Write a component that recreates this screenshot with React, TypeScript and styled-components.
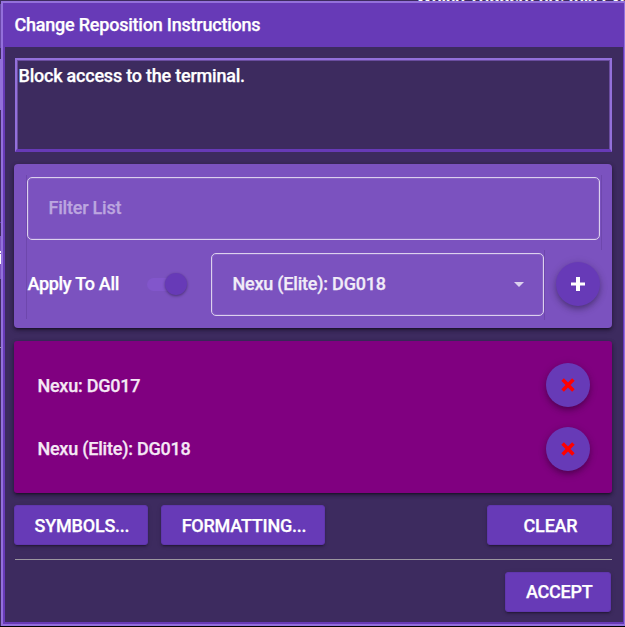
import React from "react";
import styled, { createGlobalStyle } from "styled-components";

const Global = createGlobalStyle`
  *, *::before, *::after { box-sizing: border-box; }
  html, body { margin: 0; padding: 0; background: #000; overflow: hidden; }
  body, button, input, textarea {
    font-family: Roboto, "Liberation Sans", sans-serif;
    font-size: 18px;
    font-weight: 500;
    letter-spacing: -0.22px;
    -webkit-text-stroke: 0.25px currentColor;
  }
`;

const Page = styled.div`
  width: 625px;
  height: 626px;
  display: grid;
  grid-template: 1px 625px / 1px 624px;
  background: #3d2b5f;
  overflow: hidden;
`;

const TopSliver = styled.div`
  grid-column: 1 / 3;
  height: 1px;
  overflow: hidden;
  display: flex;
  align-items: flex-end;
  justify-content: flex-end;
  color: #fff;
`;

const SliverText = styled.span`
  flex: none;
  width: 209px;
  line-height: 20px;
  height: 15px;
  margin-bottom: -1px;
  white-space: nowrap;
`;

const EdgeSliver = styled.div`
  height: 625px;
  overflow: hidden;
  display: flex;
  flex-direction: column;
`;

const EdgeBlock = styled.div<{ $h: number; $c?: string }>`
  flex: none;
  height: ${(p) => p.$h}px;
  background: ${(p) => p.$c || "transparent"};
`;

const Dialog = styled.section`
  height: 625px;
  display: flex;
  flex-direction: column;
  border: solid #9370db;
  border-width: 2px 1px 2px 2px;
  background: #3d2b5f;
`;

const Header = styled.header`
  flex: none;
  height: 44px;
  padding-left: 11.5px;
  display: flex;
  align-items: center;
  background: #673ab7;
  color: #fff;
`;

const Label = styled.span<{ $color?: string; $raise?: number; $lower?: number }>`
  color: ${(p) => p.$color || "#fff"};
  line-height: 24px;
  white-space: nowrap;
  padding-bottom: ${(p) => p.$raise ?? 0}px;
  padding-top: ${(p) => p.$lower ?? 0}px;
`;

const Body = styled.div`
  flex: 1;
  display: flex;
  flex-direction: column;
  padding: 11px 11px 0 9px;
  border: solid #673ab7;
  border-width: 0 1px 2px 2px;
`;

const Instructions = styled.textarea`
  flex: none;
  height: 94px;
  margin-left: 1px;
  padding: 5px 1.5px;
  resize: none;
  outline: none;
  border: 2px solid #9370db;
  border-bottom: 3px solid #673ab7;
  border-radius: 0;
  background: #3d2b5f;
  box-shadow: inset 1px 1px #6a4d9f, inset -1px 0 #6a4d9f;
  color: #fff;
  line-height: 21px;
`;

const shadow = "0 3px 1px -2px rgba(0,0,0,.2), 0 2px 2px rgba(0,0,0,.14), 0 1px 5px rgba(0,0,0,.12)";

const Panel = styled.div`
  flex: none;
  height: 164.4px;
  margin-top: 12px;
  padding: 11px 10px 8px 12px;
  border-radius: 4px;
  background: #7b52bf;
  box-shadow: ${shadow}, 0 2px 5px rgba(0,0,0,.3);
  display: flex;
  flex-direction: column;
`;

const FilterRow = styled.div`
  flex: none;
  height: 75px;
  padding: 2px 1px 2px 0;
  border: solid #6e47ad;
  border-width: 0 1px;
`;

const Field = styled.div`
  width: 100%;
  height: 63px;
  padding: 0 19px 0 20.5px;
  border: 1px solid #dcd1ee;
  border-radius: 5px;
  box-shadow: inset 0 0 0 1px rgba(220, 209, 238, .15);
  display: flex;
  align-items: center;
  justify-content: space-between;
`;

const FilterInput = styled.input`
  width: 400px;
  padding: 0 0 2px;
  border: 0;
  outline: 0;
  background: transparent;
  color: #fff;
  &::placeholder { color: #bca6df; opacity: 1; -webkit-text-stroke-color: #bca6df; }
`;

const ApplyRow = styled.div`
  flex: none;
  height: 69px;
  display: flex;
  align-items: flex-start;
  border-left: 1px solid #6e47ad;
`;

const ApplyGroup = styled.div`
  width: 184px;
  height: 68px;
  display: flex;
  align-items: center;
`;

const ApplyLabel = styled(Label)`
  width: 92px;
  letter-spacing: -0.28px;
  padding-left: 0.4px;
`;

const Track = styled.span`
  width: 36px;
  height: 13px;
  margin-left: 28px;
  border-radius: 7px;
  background: #8256cb;
  display: flex;
  align-items: center;
  justify-content: flex-end;
`;

const Thumb = styled.span`
  flex: none;
  width: 22px;
  height: 22px;
  margin-right: -3.5px;
  border-radius: 50%;
  background: #673ab7;
  box-shadow: 0 1px 3px rgba(0,0,0,.4);
`;

const SelectCell = styled.div`
  width: 334px;
  height: 70px;
  padding-top: 3px;
  border-right: 1px solid #6e47ad;
`;

const Caret = styled.span`
  border: solid transparent;
  border-width: 5px 5px 0;
  border-top-color: #dcd1ee;
`;

const RoundButton = styled.button`
  flex: none;
  width: 44px;
  height: 44px;
  padding: 0;
  border: 0;
  border-radius: 50%;
  background: #673ab7;
  box-shadow: 0 3px 5px -1px rgba(0,0,0,.2), 0 4px 8px rgba(0,0,0,.14), 0 1px 10px rgba(0,0,0,.12);
  display: flex;
  align-items: center;
  justify-content: center;
`;

const AddSlot = styled.div`
  margin: 12px 0 0 11px;
`;

const List = styled.div`
  flex: none;
  height: 152px;
  margin-top: 12.6px;
  padding: 12px 22px 12px 23px;
  border-radius: 3px;
  background: #800080;
  box-shadow: ${shadow}, 0 2px 5px rgba(0,0,0,.3);
`;

const ListRow = styled.div`
  height: 64px;
  padding-left: 0.4px;
  display: flex;
  align-items: center;
  justify-content: space-between;
`;

const Actions = styled.div`
  display: flex;
  gap: 13px;
  margin-top: 12px;
`;

const Button = styled.button<{ $w: number; $end?: boolean }>`
  width: ${(p) => p.$w}px;
  height: 40px;
  padding: 1.5px 0 0 2px;
  margin-left: ${(p) => (p.$end ? "auto" : "0")};
  border: 1px solid #6036ad;
  border-radius: 3px;
  background: #673ab7;
  box-shadow: ${shadow};
  color: #fff;
`;

const Divider = styled.div`
  height: 1px;
  margin: 14px 0 0 1px;
  background: #9b969f;
`;

const Footer = styled.div`
  display: flex;
  padding: 12px 1px 0 0;
`;

const AcceptButton = styled(Button)`
  padding: 0 0 0 2.5px;
`;

const PlusIcon = () => (
  <svg width="14" height="14" viewBox="0 0 14 14">
    <path d="M5 0h4v5.5h5v3H9V14H5V8.500H0v-3h5z" fill="#fff" />
  </svg>
);

const CrossIcon = () => (
  <svg width="14" height="14" viewBox="0 0 14 14">
    <path d="M1.600 1.600l10.800 10.800M12.400 1.600L1.600 12.400" stroke="#f00" strokeWidth="3.600" />
  </svg>
);

const items = ["Nexu: DG017", "Nexu (Elite): DG018"];

export default function App() {
  return (
    <>
      <Global />
      <Page>
        <TopSliver>
          <SliverText>Which Triggers fire this Event?</SliverText>
        </TopSliver>
        <EdgeSliver>
          <EdgeBlock $h={3} />
          <EdgeBlock $h={44} $c="#6a48aa" />
          <EdgeBlock $h={11} />
          <EdgeBlock $h={51} $c="#9370db" />
          <EdgeBlock $h={112} />
          <EdgeBlock $h={1} $c="#673ab7" />
          <EdgeBlock $h={13} />
          <EdgeBlock $h={15} $c="#7b52bf" />
          <EdgeBlock $h={2} $c="#fff" />
          <EdgeBlock $h={1} $c="#7b52bf" />
          <EdgeBlock $h={10} $c="#fff" />
          <EdgeBlock $h={15} $c="#7b52bf" />
          <EdgeBlock $h={68} />
          <EdgeBlock $h={1} $c="#9b969f" />
        </EdgeSliver>
        <Dialog>
          <Header><Label>Change Reposition Instructions</Label></Header>
          <Body>
            <Instructions defaultValue="Block access to the terminal." spellCheck={false} />
            <Panel>
              <FilterRow>
                <Field><FilterInput placeholder="Filter List" /></Field>
              </FilterRow>
              <ApplyRow>
                <ApplyGroup>
                  <ApplyLabel>Apply To All</ApplyLabel>
                  <Track><Thumb /></Track>
                </ApplyGroup>
                <SelectCell>
                  <Field>
                    <Label $color="#f1ecf8" $raise={2}>Nexu (Elite): DG018</Label>
                    <Caret />
                  </Field>
                </SelectCell>
                <AddSlot>
                  <RoundButton aria-label="Add"><PlusIcon /></RoundButton>
                </AddSlot>
              </ApplyRow>
            </Panel>
            <List>
              {items.map((name, i) => (
                <ListRow key={name}>
                  <Label $color="#f5e8f5" $lower={i === 0 ? 2 : 0}>{name}</Label>
                  <RoundButton aria-label="Remove"><CrossIcon /></RoundButton>
                </ListRow>
              ))}
            </List>
            <Actions>
              <Button $w={134}>SYMBOLS...</Button>
              <Button $w={164}>FORMATTING...</Button>
              <Button $w={125} $end>CLEAR</Button>
            </Actions>
            <Divider />
            <Footer><AcceptButton $w={106} $end>ACCEPT</AcceptButton></Footer>
          </Body>
        </Dialog>
      </Page>
    </>
  );
}
